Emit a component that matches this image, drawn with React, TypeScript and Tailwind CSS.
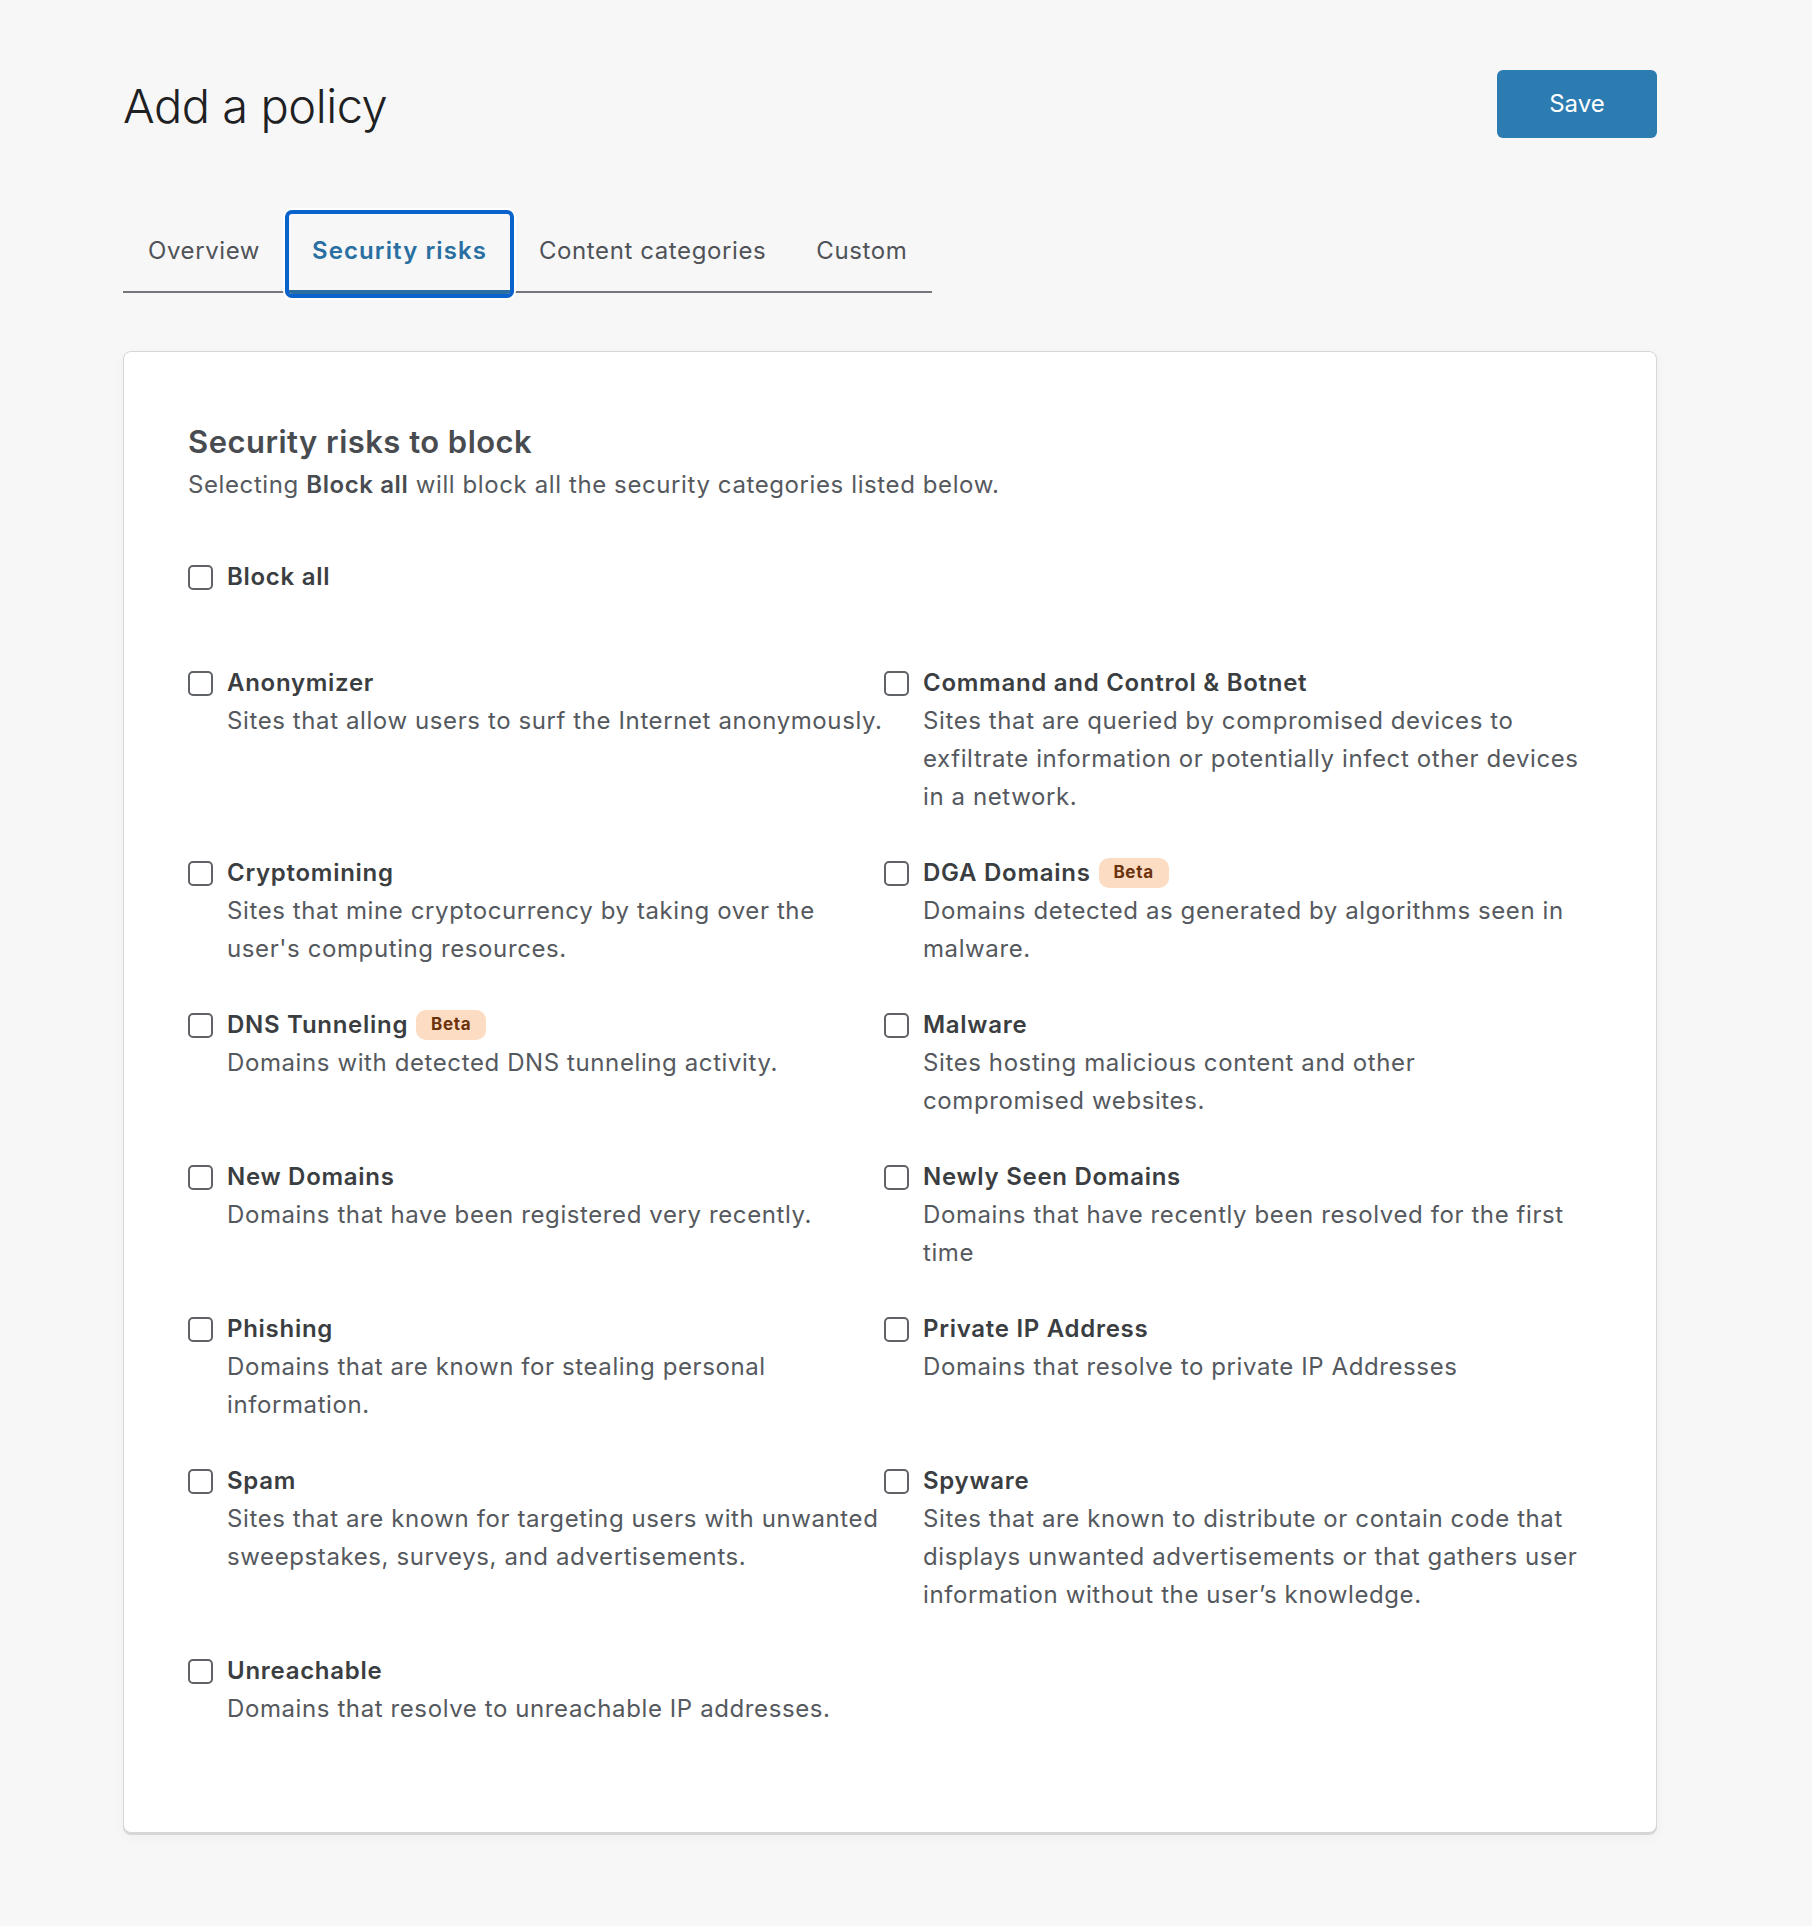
import React from "react";

type Risk = {
  title: string;
  desc: string;
  beta?: boolean;
};

const risks: Risk[] = [
  { title: "Anonymizer", desc: "Sites that allow users to surf the Internet anonymously." },
  {
    title: "Command and Control & Botnet",
    desc: "Sites that are queried by compromised devices to exfiltrate information or potentially infect other devices in a network.",
  },
  { title: "Cryptomining", desc: "Sites that mine cryptocurrency by taking over the user's computing resources." },
  { title: "DGA Domains", desc: "Domains detected as generated by algorithms seen in malware.", beta: true },
  { title: "DNS Tunneling", desc: "Domains with detected DNS tunneling activity.", beta: true },
  { title: "Malware", desc: "Sites hosting malicious content and other compromised websites." },
  { title: "New Domains", desc: "Domains that have been registered very recently." },
  { title: "Newly Seen Domains", desc: "Domains that have recently been resolved for the first time" },
  { title: "Phishing", desc: "Domains that are known for stealing personal information." },
  { title: "Private IP Address", desc: "Domains that resolve to private IP Addresses" },
  { title: "Spam", desc: "Sites that are known for targeting users with unwanted sweepstakes, surveys, and advertisements." },
  {
    title: "Spyware",
    desc: "Sites that are known to distribute or contain code that displays unwanted advertisements or that gathers user information without the user’s knowledge.",
  },
  { title: "Unreachable", desc: "Domains that resolve to unreachable IP addresses." },
];

const tabs = ["Overview", "Security risks", "Content categories", "Custom"];

function Checkbox() {
  return (
    <div className="h-[38px] flex items-center shrink-0">
      <span className="block w-[25px] h-[25px] rounded-[5px] border-2 border-[#5f6368] bg-white" />
    </div>
  );
}

function Beta() {
  return (
    <span className="ml-[8px] inline-flex items-center justify-center h-[30px] w-[70px] rounded-[10px] bg-[#fcdcc2] text-[#6b320c] text-[17px] font-bold tracking-[0.04em]">
      Beta
    </span>
  );
}

function RiskItem({ risk }: { risk: Risk }) {
  return (
    <div className="flex gap-[14px]">
      <Checkbox />
      <div className="min-w-0">
        <div className="flex items-center h-[38px] text-[24px] font-semibold text-[#3b3e41] tracking-[0.03em]">
          {risk.title}
          {risk.beta && <Beta />}
        </div>
        <p className="text-[24px] leading-[38px] text-[#55595e] tracking-[0.025em]">{risk.desc}</p>
      </div>
    </div>
  );
}

export default function App() {
  return (
    <div className="min-h-[1926px] bg-[#f7f7f7] pl-[123px] pr-[155px] pt-[70px] pb-[93px] font-['Inter',sans-serif]">
      {/* Header */}
      <div className="flex items-center justify-between h-[68px]">
        <h1 className="pt-[5px] text-[47px] font-light text-[#1e2022] tracking-[-0.01em]">Add a policy</h1>
        <button className="w-[160px] h-[68px] rounded-[6px] bg-[#2c7cb1] text-white text-[24px]">Save</button>
      </div>

      {/* Tabs */}
      <nav className="mt-[72px] flex w-fit border-b-2 border-[#74787c]">
        {tabs.map((t) =>
          t === "Security risks" ? (
            <div key={t} className="relative h-[81px] px-[27px] flex items-center text-[24px] font-semibold text-[#2a6fa1] tracking-[0.045em]">
              {t}
              <div className="absolute left-0 right-0 top-0 -bottom-[7px] rounded-[7px] border-4 border-[#0a62cc] shadow-[0_0_0_2px_white] overflow-hidden">
                <div className="absolute left-0 right-0 bottom-0 h-[4px] bg-[#2a6fa1]" />
              </div>
            </div>
          ) : (
            <div key={t} className="h-[81px] px-[25px] flex items-center text-[24px] text-[#4f5358] tracking-[0.025em]">
              {t}
            </div>
          )
        )}
      </nav>

      {/* Card */}
      <div className="mt-[58px] bg-white border border-[#d6d6d6] rounded-[8px] shadow-[0_2px_0_#d6d6d6,0_4px_14px_rgba(0,0,0,0.04)] px-[64px] pt-[72px] pb-[104px]">
        <h2 className="text-[31px] leading-[36px] font-semibold text-[#484c50] tracking-[0.015em]">Security risks to block</h2>
        <p className="mt-[6px] text-[24px] leading-[38px] text-[#55595e] tracking-[0.025em]">
          Selecting <span className="font-semibold text-[#484c50]">Block all</span> will block all the security categories listed below.
        </p>

        <div className="mt-[54px] flex gap-[14px]">
          <Checkbox />
          <div className="h-[38px] flex items-center text-[24px] font-semibold text-[#3b3e41] tracking-[0.03em]">Block all</div>
        </div>

        <div className="mt-[68px] grid grid-cols-[696px_696px] gap-y-[38px]">
          {risks.map((r) => (
            <RiskItem key={r.title} risk={r} />
          ))}
        </div>
      </div>
    </div>
  );
}
